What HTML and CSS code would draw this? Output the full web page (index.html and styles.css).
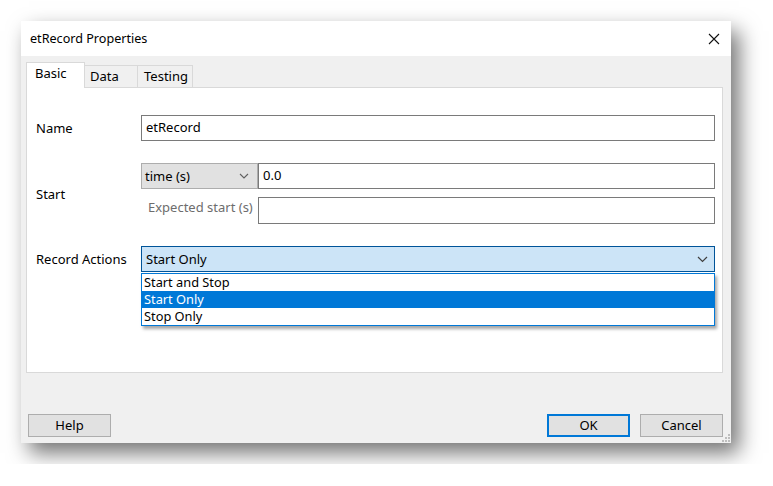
FILE: index.html
```html
<!DOCTYPE html>
<html>
<head>
<meta charset="utf-8">
<link rel="stylesheet" href="styles.css">
</head>
<body>
<div class="window">
  <div class="titlebar">
    <span class="title">etRecord Properties</span>
    <svg class="close" width="12" height="12" viewBox="0 0 12 12"><path d="M1 1 L11 11 M11 1 L1 11" stroke="#111" stroke-width="1.1" fill="none"/></svg>
  </div>
  <div class="client">
    <div class="tabs">
      <div class="tab active">Basic</div>
      <div class="tab">Data</div>
      <div class="tab">Testing</div>
    </div>
    <div class="panel">
      <div class="row">
        <div class="label">Name</div>
        <div class="input">etRecord</div>
      </div>
      <div class="row start-row">
        <div class="label">Start</div>
        <div class="start-fields">
          <div class="subrow">
            <div class="combo gray">time (s)<svg class="chev" width="10" height="6" viewBox="0 0 10 6"><path d="M1 1 L5 5 L9 1" stroke="#606060" stroke-width="1.1" fill="none"/></svg></div>
            <div class="input grow">0.0</div>
          </div>
          <div class="subrow">
            <div class="sublabel">Expected start (s)</div>
            <div class="input grow"></div>
          </div>
        </div>
      </div>
      <div class="row">
        <div class="label">Record Actions</div>
        <div class="combo-wrap">
          <div class="combo selected">Start Only<svg class="chev" width="11" height="7" viewBox="0 0 11 7"><path d="M1 1 L5.5 5.5 L10 1" stroke="#404040" stroke-width="1.2" fill="none"/></svg></div>
          <div class="droplist">
            <div class="item">Start and Stop</div>
            <div class="item hl">Start Only</div>
            <div class="item">Stop Only</div>
          </div>
        </div>
      </div>
    </div>
    <div class="buttons">
      <div class="btn">Help</div>
      <div class="spacer"></div>
      <div class="btn default">OK</div>
      <div class="btn">Cancel</div>
    </div>
    <svg class="grip" width="8" height="8" viewBox="0 0 8 8"><g fill="#bdbdbd"><rect x="6" y="0" width="2" height="2"/><rect x="3" y="3" width="2" height="2"/><rect x="6" y="3" width="2" height="2"/><rect x="0" y="6" width="2" height="2"/><rect x="3" y="6" width="2" height="2"/><rect x="6" y="6" width="2" height="2"/></g></svg>
  </div>
</div>
</body>
</html>
```
FILE: styles.css
```css
html, body {
  margin: 0;
  padding: 0;
  background: #ffffff;
}
body {
  padding: 21px;
  font-family: "Noto Sans", "Open Sans", sans-serif;
  font-size: 13px;
  color: #000;
}
.window {
  width: 710px;
  height: 422px;
  display: flex;
  flex-direction: column;
  box-shadow: 8px 10px 20px rgba(0, 0, 0, 0.55);
  background: #f0f0f0;
}
.titlebar {
  height: 35px;
  background: #ffffff;
  display: flex;
  align-items: center;
  justify-content: space-between;
  padding: 0 11px 0 9px;
  flex-shrink: 0;
}
.title {
  font-size: 12.6px;
}
.client {
  flex: 1;
  position: relative;
  padding: 6px 8px 0 5px;
  display: flex;
  flex-direction: column;
}
.tabs {
  display: flex;
  height: 25px;
  align-items: flex-end;
  position: relative;
  z-index: 1;
}
.tab {
  height: 22px;
  box-sizing: border-box;
  border: 1px solid #d9d9d9;
  border-bottom: none;
  background: #f0f0f0;
  padding: 0 0 0 5px;
  line-height: 21px;
  margin-left: -1px;
}
.tab:nth-child(2) { width: 54px; }
.tab:nth-child(3) { width: 56px; padding-left: 6px; }
.tab.active {
  height: 26px;
  width: 59px;
  margin-left: 0;
  background: #ffffff;
  padding-left: 8px;
  line-height: 21px;
  margin-bottom: -1px;
}
.panel {
  height: 286px;
  box-sizing: border-box;
  background: #ffffff;
  border: 1px solid #d9d9d9;
  padding: 27px 7px 0 9px;
}
.row {
  display: flex;
  align-items: center;
  margin-bottom: 22px;
}
.label {
  width: 105px;
  flex-shrink: 0;
}
.input {
  flex: 1;
  height: 26px;
  box-sizing: border-box;
  border: 1px solid #7a7a7a;
  background: #fff;
  padding-left: 4px;
  line-height: 22px;
}
.start-fields {
  flex: 1;
  display: flex;
  flex-direction: column;
  gap: 8px;
}
.subrow {
  display: flex;
  align-items: center;
}
.subrow .input { height: 26px; }
.subrow:last-child .input { height: 27px; }
.combo {
  height: 26px;
  box-sizing: border-box;
  display: flex;
  align-items: center;
  justify-content: space-between;
  padding: 0 8px 0 3px;
}
.combo.gray {
  width: 117px;
  background: #e1e1e1;
  border: 1px solid #adadad;
}
.sublabel {
  width: 117px;
  box-sizing: border-box;
  padding-left: 7px;
  color: #6d6d6d;
  position: relative;
  top: -4px;
  white-space: nowrap;
}
.combo-wrap {
  flex: 1;
  position: relative;
}
.combo.selected {
  background: #cce4f7;
  border: 1px solid #005499;
  padding: 0 6px 0 4px;
}
.droplist {
  position: absolute;
  left: 0;
  right: 0;
  top: 27px;
  background: #fff;
  border: 1px solid #0078d7;
  box-shadow: 2px 3px 3px rgba(0, 0, 0, 0.35);
  z-index: 5;
}
.item {
  height: 17px;
  line-height: 17px;
  padding-left: 2px;
  font-size: 12.8px;
}
.item.hl {
  background: #0078d7;
  color: #fff;
}
.buttons {
  display: flex;
  margin-top: 41px;
  padding-left: 2px;
  gap: 10px;
}
.spacer { flex: 1; }
.btn {
  width: 83px;
  height: 23px;
  box-sizing: border-box;
  background: #e1e1e1;
  border: 1px solid #adadad;
  text-align: center;
  line-height: 21px;
  font-size: 13px;
}
.btn.default {
  border: 2px solid #0078d7;
  line-height: 19px;
}
.grip {
  position: absolute;
  right: 1px;
  bottom: 1px;
}
```
